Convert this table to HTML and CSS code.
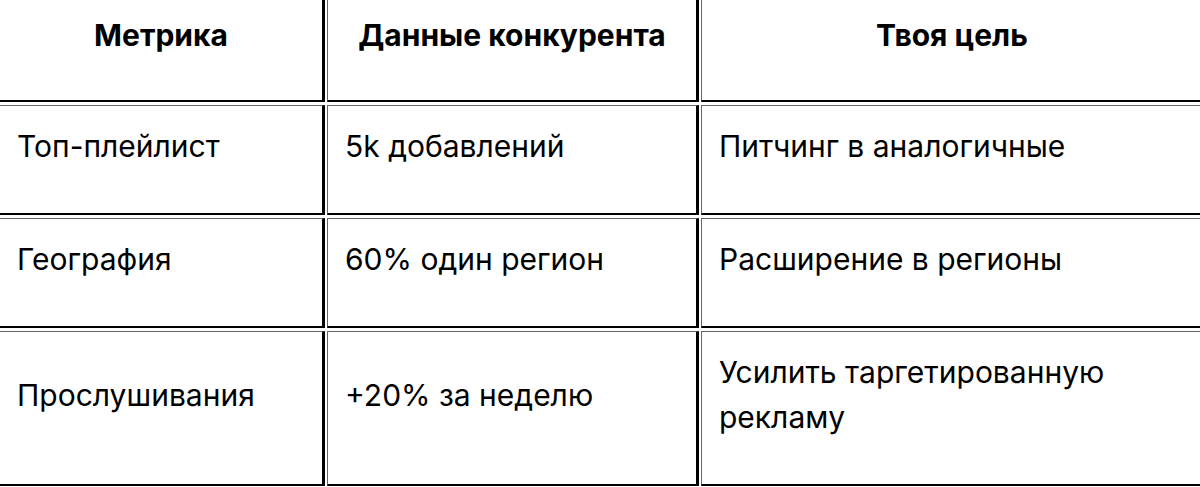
FILE: index.html
```html
<!DOCTYPE html>
<html lang="ru">
<head>
<meta charset="utf-8">
<title>Метрики</title>
<link rel="stylesheet" href="styles.css">
</head>
<body>
<table class="grid">
  <thead>
    <tr>
      <th class="c1">Метрика</th>
      <th class="c2">Данные конкурента</th>
      <th class="c3">Твоя цель</th>
    </tr>
  </thead>
  <tbody>
    <tr>
      <td>Топ-плейлист</td>
      <td>5k добавлений</td>
      <td>Питчинг в аналогичные</td>
    </tr>
    <tr>
      <td>География</td>
      <td>60% один регион</td>
      <td>Расширение в регионы</td>
    </tr>
    <tr>
      <td>Прослушивания</td>
      <td>+20% за неделю</td>
      <td>Усилить таргетированную рекламу</td>
    </tr>
  </tbody>
</table>
</body>
</html>
```
FILE: styles.css
```css
html, body {
  margin: 0;
  padding: 0;
  overflow: hidden;
  background: #fff;
}
body {
  font-family: Inter, Roboto, "Liberation Sans", sans-serif;
  font-size: 30px;
  line-height: 45px;
  color: #000;
}
.grid {
  table-layout: fixed;
  width: 1210px;
  border-collapse: separate;
  border-spacing: 2px 3px;
  margin: -11px 0 0 -3px;
}
.grid th, .grid td {
  box-sizing: border-box;
  padding: 18px 17px 44px 17px;
  border-top: 1px solid #666;
  border-left: 1px solid #666;
  border-right: 3px solid #000;
  border-bottom: 2px solid #000;
  vertical-align: middle;
  text-align: left;
  font-weight: 400;
}
.grid th {
  padding-top: 20px;
  padding-bottom: 42px;
  text-align: center;
  font-weight: 700;
}
.c1 { width: 326px; }
.c2 { width: 372px; }
.c3 { width: 504px; }
```
